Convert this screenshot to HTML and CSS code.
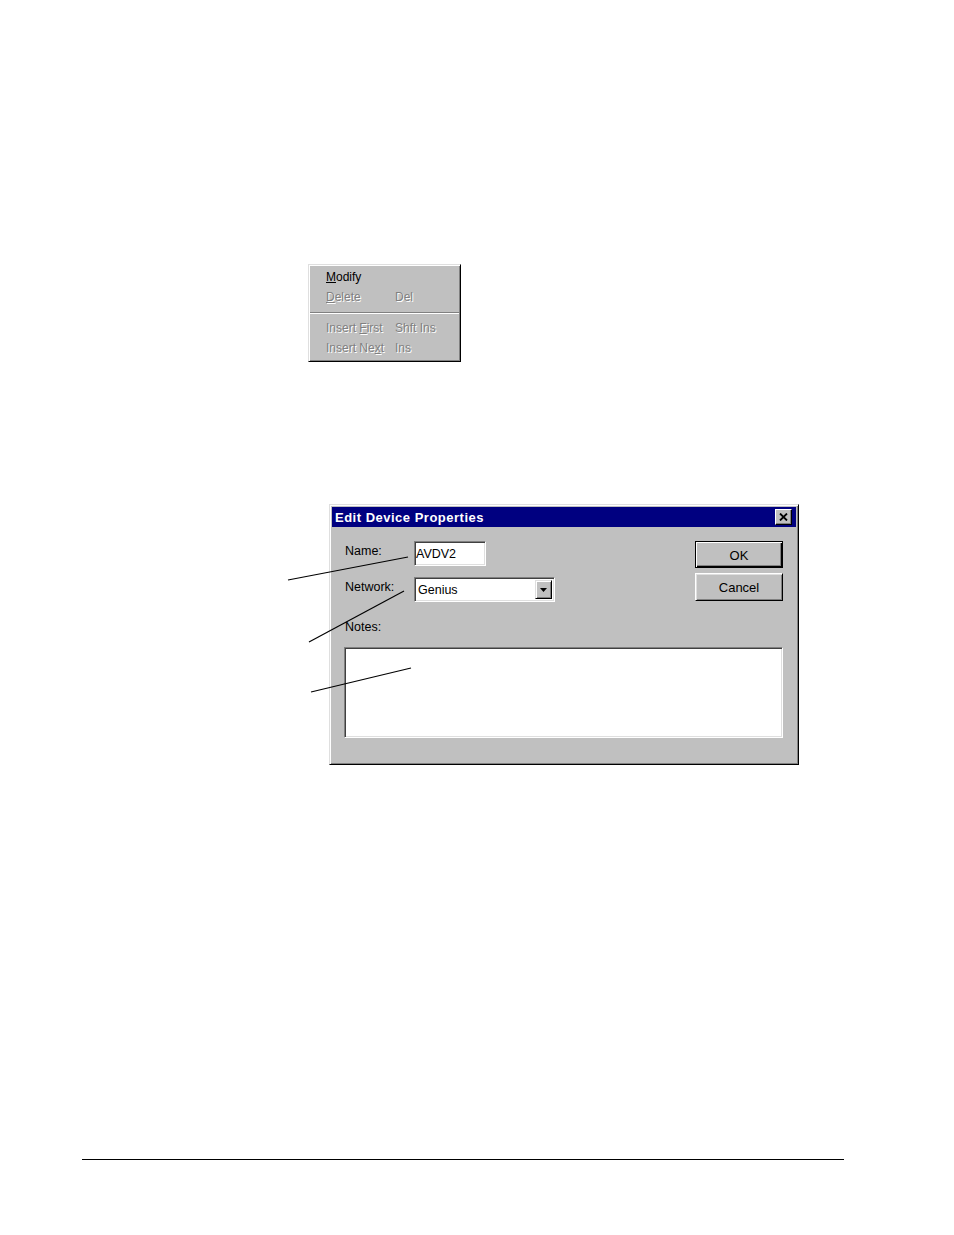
FILE: index.html
```html
<!DOCTYPE html>
<html>
<head>
<meta charset="utf-8">
<title>Edit Device Properties</title>
<link rel="stylesheet" href="styles.css">
</head>
<body>
<div class="page">
  <div class="menu">
    <div class="menu-item"><span class="mi-label"><u>M</u>odify</span><span class="mi-key"></span></div>
    <div class="menu-item disabled"><span class="mi-label"><u>D</u>elete</span><span class="mi-key">Del</span></div>
    <div class="menu-sep"></div>
    <div class="menu-item disabled"><span class="mi-label">Insert <u>F</u>irst</span><span class="mi-key">Shft Ins</span></div>
    <div class="menu-item disabled"><span class="mi-label">Insert Ne<u>x</u>t</span><span class="mi-key">Ins</span></div>
  </div>

  <div class="dialog">
    <div class="titlebar">
      <span class="title">Edit Device Properties</span>
      <span class="close-btn">
        <svg width="9" height="8" viewBox="0 0 9 8"><path d="M1 0.5 L8 7.5 M8 0.5 L1 7.5" stroke="#000" stroke-width="1.8"/></svg>
      </span>
    </div>
    <div class="dlg-body">
      <div class="top-row">
        <div class="fields">
          <div class="field-row">
            <span class="label">Name:</span>
            <div class="textbox name-box">AVDV2</div>
          </div>
          <div class="field-row second">
            <span class="label">Network:</span>
            <div class="textbox combo">
              <span class="combo-text">Genius</span>
              <span class="combo-btn">
                <svg width="7" height="4" viewBox="0 0 7 4"><path d="M0 0 H7 L3.5 4 Z" fill="#000"/></svg>
              </span>
            </div>
          </div>
        </div>
        <div class="buttons">
          <div class="btn default">OK</div>
          <div class="btn">Cancel</div>
        </div>
      </div>
      <div class="notes-label">Notes:</div>
      <div class="notes-box"></div>
    </div>
  </div>

  <div class="rule"></div>

  <svg class="callouts" width="954" height="1235" viewBox="0 0 954 1235">
    <line x1="288" y1="580" x2="408" y2="557" stroke="#000" stroke-width="1.2"/>
    <line x1="309" y1="642" x2="404" y2="591" stroke="#000" stroke-width="1.2"/>
    <line x1="311" y1="692" x2="411" y2="668" stroke="#000" stroke-width="1.2"/>
  </svg>
</div>
</body>
</html>
```

FILE: styles.css
```css
html, body {
  margin: 0;
  padding: 0;
  background: #fff;
}

.page {
  position: relative;
  width: 954px;
  min-height: 1235px;
  padding-top: 264px;
  box-sizing: border-box;
  font-family: "Liberation Sans", Arial, sans-serif;
  font-size: 12px;
  color: #000;
}

/* ---------- context menu ---------- */
.menu {
  margin-left: 308px;
  width: 153px;
  box-sizing: border-box;
  background: #c0c0c0;
  border: 1px solid;
  border-color: #dfdfdf #000 #000 #dfdfdf;
  box-shadow: inset 1px 1px 0 #fff, inset -1px -1px 0 #808080;
  padding: 2px 0 3px;
}

.menu-item {
  display: flex;
  height: 20px;
  align-items: center;
  padding-left: 17px;
  line-height: 14px;
}

.mi-label {
  width: 69px;
}

.menu-item.disabled {
  color: #808080;
  text-shadow: 1px 1px 0 #fff;
}

.menu-sep {
  height: 11px;
  display: flex;
  flex-direction: column;
  justify-content: center;
  padding: 0 1px;
}

.menu-sep::before {
  content: "";
  display: block;
  height: 1px;
  background: #808080;
  border-bottom: 1px solid #fff;
}

/* ---------- dialog ---------- */
.dialog {
  margin-top: 142px;
  margin-left: 329px;
  width: 470px;
  height: 261px;
  box-sizing: border-box;
  background: #c0c0c0;
  border: 1px solid;
  border-color: #dfdfdf #000 #000 #dfdfdf;
  box-shadow: inset 1px 1px 0 #fff, inset -1px -1px 0 #808080;
  padding: 2px;
  font-size: 12.5px;
}

.titlebar {
  height: 20px;
  background: #000080;
  display: flex;
  align-items: center;
  justify-content: space-between;
  padding: 0 4px 0 3px;
}

.title {
  color: #fff;
  font-weight: bold;
  font-size: 13px;
  letter-spacing: 0.5px;
}

.close-btn {
  width: 17px;
  height: 16px;
  box-sizing: border-box;
  background: #c0c0c0;
  border: 1px solid;
  border-color: #fff #000 #000 #fff;
  box-shadow: inset -1px -1px 0 #808080;
  display: flex;
  align-items: center;
  justify-content: center;
}

.close-btn svg {
  display: block;
}

.dlg-body {
  padding: 14px 13px 0 12px;
}

.top-row {
  display: flex;
  justify-content: space-between;
  align-items: flex-start;
}

.fields {
  display: flex;
  flex-direction: column;
}

.field-row {
  display: flex;
  align-items: flex-start;
}

.field-row.second {
  margin-top: 11px;
}

.label {
  width: 69px;
  padding-left: 1px;
  margin-top: 3px;
  line-height: 14px;
}

.textbox {
  height: 25px;
  box-sizing: border-box;
  background: #fff;
  border: 1px solid;
  border-color: #808080 #fff #fff #808080;
  box-shadow: inset 1px 1px 0 #404040, inset -1px -1px 0 #dfdfdf;
  line-height: 21px;
  padding: 2px 0 0 1px;
}

.name-box {
  width: 72px;
}

.combo {
  width: 141px;
  display: flex;
  justify-content: space-between;
  align-items: stretch;
  padding: 2px;
  line-height: 21px;
}

.combo-text {
  padding-left: 1px;
}

.combo-btn {
  width: 17px;
  box-sizing: border-box;
  background: #c0c0c0;
  border: 1px solid;
  border-color: #dfdfdf #000 #000 #dfdfdf;
  box-shadow: inset 1px 1px 0 #fff, inset -1px -1px 0 #808080;
  display: flex;
  align-items: center;
  justify-content: center;
}

.combo-btn svg {
  display: block;
}

.buttons {
  display: flex;
  flex-direction: column;
  gap: 5px;
}

.btn {
  width: 88px;
  height: 28px;
  box-sizing: border-box;
  background: #c0c0c0;
  border: 1px solid;
  border-color: #fff #000 #000 #fff;
  box-shadow: inset 1px 1px 0 #dfdfdf, inset -1px -1px 0 #808080;
  display: flex;
  align-items: center;
  justify-content: center;
  padding-top: 1px;
  font-size: 13px;
}

.btn.default {
  height: 27px;
  border: 1px solid #000;
  box-shadow: inset 1px 1px 0 #fff, inset -1px -1px 0 #000, inset -2px -2px 0 #808080;
}

.notes-label {
  margin-top: 18px;
  padding-left: 1px;
  line-height: 14px;
}

.notes-box {
  margin-top: 13px;
  width: 439px;
  height: 91px;
  box-sizing: border-box;
  background: #fff;
  border: 1px solid;
  border-color: #808080 #fff #fff #808080;
  box-shadow: inset 1px 1px 0 #404040, inset -1px -1px 0 #dfdfdf;
}

/* ---------- footer rule ---------- */
.rule {
  margin-top: 394px;
  margin-left: 82px;
  width: 762px;
  height: 1px;
  background: #000;
}

/* ---------- callout lines over the figure ---------- */
.callouts {
  position: absolute;
  top: 0;
  left: 0;
  pointer-events: none;
}
```
